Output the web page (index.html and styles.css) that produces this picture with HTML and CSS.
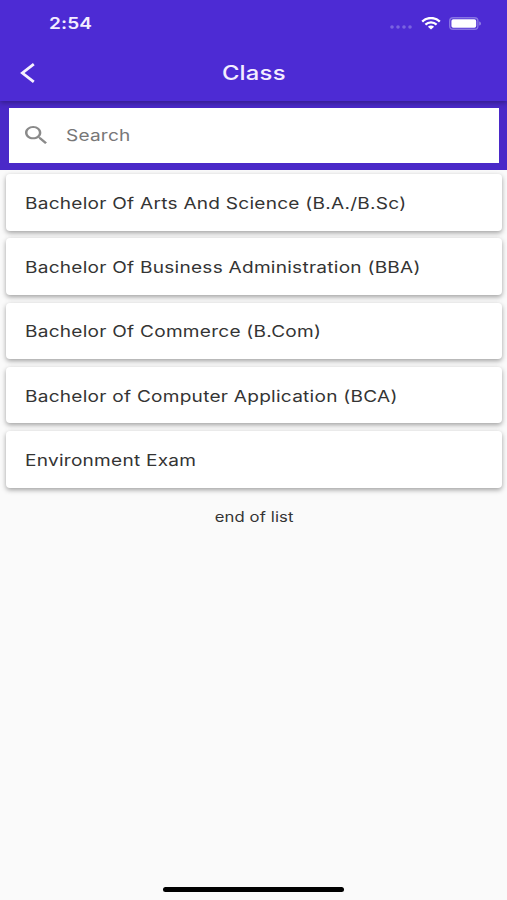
FILE: index.html
```html
<!DOCTYPE html>
<html lang="en">
<head>
    <meta charset="UTF-8">
    <meta name="viewport" content="width=device-width, initial-scale=1.0">
    <title>Class</title>
    <link rel="stylesheet" href="styles.css">
</head>
<body>
    <div class="screen">
        <header class="header">
            <div class="status-bar">
                <span class="time wide">2:54</span>
                <div class="status-icons">
                    <svg class="dots" width="24" height="6" viewBox="0 0 24 6">
                        <circle cx="3" cy="3" r="1.8"/>
                        <circle cx="9" cy="3" r="1.8"/>
                        <circle cx="15" cy="3" r="1.8"/>
                        <circle cx="21" cy="3" r="1.8"/>
                    </svg>
                    <svg class="wifi" width="20" height="13" viewBox="0 0 20 13">
                        <path d="M1.2 4.6C6 -0.2 14 -0.2 18.8 4.6" stroke-width="2.3"/>
                        <path d="M4.4 7.6C7.5 4.6 12.5 4.6 15.6 7.6" stroke-width="2.2"/>
                        <path class="fill" d="M6.9 9.7C8.7 8.2 11.3 8.2 13.1 9.7L10 12.4Z"/>
                    </svg>
                    <svg class="battery" width="33" height="13" viewBox="0 0 33 13">
                        <rect x="0.7" y="0.7" width="28.2" height="11.6" rx="3.4" fill="none" stroke="#8774e3" stroke-width="1.4"/>
                        <rect x="2.4" y="2.2" width="24.8" height="8.6" rx="1.8" fill="#fff"/>
                        <path d="M30.2 4.4C32.5 5 32.5 8 30.2 8.6Z" fill="#9383e6"/>
                    </svg>
                </div>
            </div>
            <div class="title-bar">
                <svg class="back" width="16" height="22" viewBox="0 0 16 22">
                    <path d="M13.8 2.2L2.4 11L13.8 19.8"/>
                </svg>
                <h1 class="title wide">Class</h1>
            </div>
        </header>

        <div class="search">
            <div class="search-box">
                <svg class="search-icon" width="22" height="18" viewBox="3 3 17.5 17.5" preserveAspectRatio="none">
                    <path d="M15.5 14h-.79l-.28-.27C15.41 12.59 16 11.11 16 9.5 16 5.91 13.09 3 9.5 3S3 5.91 3 9.5 5.91 16 9.5 16c1.61 0 3.09-.59 4.23-1.57l.27.28v.79l5 4.99L20.49 19l-4.99-5zm-6 0C7.01 14 5 11.99 5 9.5S7.01 5 9.5 5 14 7.01 14 9.5 11.99 14 9.5 14z"/>
                </svg>
                <span class="placeholder wide">Search</span>
            </div>
        </div>

        <main class="list">
            <div class="card"><span class="wide">Bachelor Of Arts And Science (B.A./B.Sc)</span></div>
            <div class="card"><span class="wide">Bachelor Of Business Administration (BBA)</span></div>
            <div class="card"><span class="wide">Bachelor Of Commerce (B.Com)</span></div>
            <div class="card"><span class="wide">Bachelor of Computer Application (BCA)</span></div>
            <div class="card"><span class="wide">Environment Exam</span></div>
            <p class="end"><span class="wide">end of list</span></p>
        </main>

        <div class="home-indicator"></div>
    </div>
</body>
</html>
```
FILE: styles.css
```css
html, body {
    margin: 0;
    height: 100%;
}

body {
    font-family: Inter, "Liberation Sans", sans-serif;
    background: #fafafa;
    color: #343434;
}

.screen {
    display: flex;
    flex-direction: column;
    height: 900px;
    overflow: hidden;
}

/* extended letterforms */
.wide {
    display: inline-block;
    transform: scaleX(1.19);
    transform-origin: left center;
    white-space: nowrap;
}

.header {
    z-index: 1;
    height: 101px;
    background: #4d2bd4;
    box-shadow: 0 2px 5px rgba(0, 0, 0, 0.3);
    color: #f3edff;
}

.status-bar {
    display: flex;
    justify-content: space-between;
    align-items: center;
    height: 46px;
    padding: 0 25px 0 49px;
}

.time {
    font-size: 16px;
    font-weight: 600;
    letter-spacing: 0.1px;
}

.status-icons {
    display: flex;
    align-items: center;
    gap: 8px;
}

.dots {
    fill: #7a63e0;
    margin-top: 8px;
}

.wifi {
    fill: none;
    stroke: #fff;
}

.wifi .fill {
    fill: #fff;
    stroke: none;
}

.title-bar {
    display: grid;
    grid-template-columns: 40px 1fr 40px;
    align-items: center;
    height: 54px;
}

.back {
    margin-left: 20px;
    fill: none;
    stroke: #f6f1ff;
    stroke-width: 2.8;
}

.title {
    justify-self: center;
    margin: 0;
    font-size: 20px;
    font-weight: 500;
    letter-spacing: 0.2px;
    transform-origin: center;
}

.search {
    height: 55px;
    padding: 7px 8px 7px 9px;
    background: #4a29c8;
}

.search-box {
    display: flex;
    align-items: center;
    height: 55px;
    box-sizing: border-box;
    padding-bottom: 2px;
    background: #fff;
    position: relative;
    z-index: 2;
}

.search-icon {
    margin-left: 16px;
    fill: #8a8a8a;
}

.placeholder {
    margin-left: 19px;
    font-size: 16px;
    letter-spacing: 0.18px;
    color: #777;
}

.list {
    flex: 1;
    display: flex;
    flex-direction: column;
    gap: 7.8px;
    padding: 4px 5px 0 6px;
}

.card {
    display: flex;
    align-items: center;
    height: 56.5px;
    box-sizing: border-box;
    padding: 1px 0 0 19px;
    background: #fff;
    border-radius: 4px;
    box-shadow: 0 2px 5px rgba(0, 0, 0, 0.36);
    font-size: 16px;
    letter-spacing: 0.22px;
}

.end {
    margin: 13px 0 0;
    text-align: center;
    font-size: 14px;
    letter-spacing: 0.1px;
}

.end .wide {
    transform-origin: center;
}

.home-indicator {
    align-self: center;
    width: 181px;
    height: 5px;
    margin-bottom: 8px;
    border-radius: 3px;
    background: #000;
}
```
